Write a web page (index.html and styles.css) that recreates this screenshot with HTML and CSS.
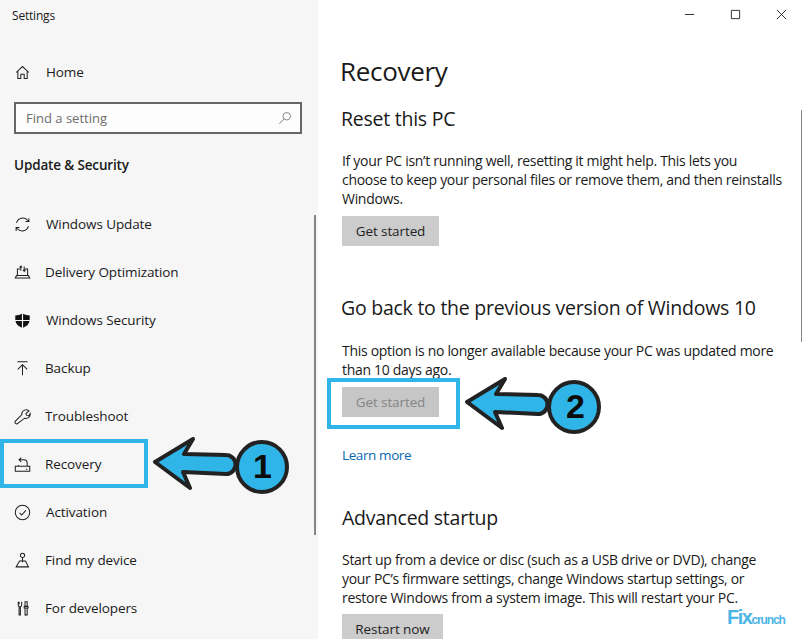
FILE: index.html
```html
<!DOCTYPE html>
<html lang="en">
<head>
    <meta charset="UTF-8">
    <meta name="viewport" content="width=device-width, initial-scale=1.0">
    <title>Settings - Recovery</title>
    <link rel="stylesheet" href="styles.css">
</head>
<body>
    <div class="window">
        <div class="sidebar">
            <div class="app-title">Settings</div>
            <div class="nav-item home shift">
                <svg class="icon" viewBox="0 0 20 20"><path d="M2.500 10 10 3l7.500 7M4.500 8.500V17H8v-5h4v5h3.500V8.500"/></svg>
                <span>Home</span>
            </div>
            <div class="search">
                <span>Find a setting</span>
                <svg class="search-icon" viewBox="0 0 16 16"><circle cx="10" cy="6" r="4.300"/><path d="M7 9.200 1.500 14.500"/></svg>
            </div>
            <h2 class="section">Update &amp; Security</h2>
            <div class="nav">
                <div class="nav-item shift">
                    <svg class="icon" viewBox="0 0 20 20"><path d="M3 8a7.500 7.500 0 0 1 13-3l1.500 1.500M17.500 2.500v4h-4M17 12a7.500 7.500 0 0 1-13 3l-1.500-1.500M2.500 17.500v-4h4"/></svg>
                    <span>Windows Update</span>
                </div>
                <div class="nav-item">
                    <svg class="icon" viewBox="0 0 20 20"><path d="M4 13V6h3M16 13V6h-3M1.500 16.500h17l-1.500-3H3zM8 8V2.500L6.500 4M8 2.500 9.500 4M12 3v5.500l-1.500-1.500M12 8.500l1.500-1.500"/></svg>
                    <span>Delivery Optimization</span>
                </div>
                <div class="nav-item shift">
                    <svg class="icon" viewBox="0 0 20 20"><path class="solid" d="M9.300 2C7 3.300 4 4 1.500 4v5.300h7.800zM10.700 2C13 3.300 16 4 18.500 4v5.300h-7.800zM1.700 10.700h7.600v7.800C5.500 17.300 2.500 14.500 1.700 10.700zM10.700 10.700h7.600c-.8 3.800-3.800 6.600-7.600 7.800z"/></svg>
                    <span>Windows Security</span>
                </div>
                <div class="nav-item">
                    <svg class="icon" viewBox="0 0 20 20"><path d="M4 2h12M10 18V5.500M4.500 11 10 5.500l5.500 5.500"/></svg>
                    <span>Backup</span>
                </div>
                <div class="nav-item">
                    <svg class="icon" viewBox="0 0 20 20"><path d="M12.500 2.500a5 5 0 0 1 5 1l-3.500 3.200 1 2 2.500.3 1.500-2.500a5 5 0 0 1-6.500 5.500L4.500 18a1.800 1.800 0 0 1-2.800-2.500l7.500-7.700a5 5 0 0 1 3.300-5.300z"/></svg>
                    <span>Troubleshoot</span>
                </div>
                <div class="nav-item">
                    <svg class="icon" viewBox="0 0 20 20"><path d="M1.500 18h17v-6h-17zM8.500 2 6 4.500 8.500 7M6 4.500h5.500a4 4 0 0 1 4 4V12M5.500 12v-1.500M14 15.500h1.500"/></svg>
                    <span>Recovery</span>
                </div>
                <div class="nav-item shift">
                    <svg class="icon" viewBox="0 0 20 20"><circle cx="10" cy="10" r="8.500"/><path d="m6.500 10.500 2.500 2.500 5-5.500"/></svg>
                    <span>Activation</span>
                </div>
                <div class="nav-item">
                    <svg class="icon" viewBox="0 0 20 20"><circle cx="10" cy="4" r="2.500"/><path d="M10 6.500V12M6.500 10.500h7l3.500 7H2.500z"/></svg>
                    <span>Find my device</span>
                </div>
                <div class="nav-item">
                    <svg class="icon" viewBox="0 0 20 20"><path d="M6 2v3M9 2v4a2 2 0 0 1-4 0V2M6 8h1.500v9.500H6zM13 2h2.500v5.500H13zM12 7.500h4.500v2H12zM13 9.500h2.500v8H13z"/></svg>
                    <span>For developers</span>
                </div>
            </div>
            <div class="scrollbar"></div>
        </div>

        <div class="main">
            <div class="window-controls">
                <svg viewBox="0 0 12 12"><path d="M1 6h10"/></svg>
                <svg viewBox="0 0 12 12"><path d="M1.500 1.500h9v9h-9z"/></svg>
                <svg viewBox="0 0 12 12"><path d="m1 1 10 10M11 1 1 11"/></svg>
            </div>
            <h1>Recovery</h1>
            <h3 class="reset-title">Reset this PC</h3>
            <p>If your PC isn’t running well, resetting it might help. This lets you<br>choose to keep your personal files or remove them, and then reinstalls<br>Windows.</p>
            <button class="button">Get started</button>

            <h3 class="back-title">Go back to the previous version of Windows 10</h3>
            <p>This option is no longer available because your PC was updated more<br>than 10 days ago.</p>
            <button class="button disabled">Get started</button>
            <a class="learn" href="#">Learn more</a>

            <h3 class="advanced-title">Advanced startup</h3>
            <p>Start up from a device or disc (such as a USB drive or DVD), change<br>your PC’s firmware settings, change Windows startup settings, or<br>restore Windows from a system image. This will restart your PC.</p>
            <button class="button restart">Restart now</button>
            <div class="main-scrollbar"></div>
        </div>

        <!-- tutorial markup drawn over the screenshot -->
        <div class="mark mark-recovery"></div>
        <div class="mark mark-started"></div>

        <svg class="callout callout-one" viewBox="0 0 140 60">
            <path class="arrow" d="M3 25 41 2 32 17 74 18a9.500 9.500 0 0 1 0 19L31 35 38 51z"/>
            <circle class="badge" cx="110" cy="30" r="25"/>
        </svg>
        <span class="badge-num num-one">1</span>

        <svg class="callout callout-two" viewBox="0 0 140 60">
            <path class="arrow" d="M3 25 41 2 32 17 74 18a9.500 9.500 0 0 1 0 19L31 35 38 51z"/>
            <circle class="badge" cx="110" cy="30" r="25"/>
        </svg>
        <span class="badge-num num-two">2</span>

        <div class="watermark"><span class="fix">Fix</span><span class="crunch">crunch</span></div>
    </div>
</body>
</html>
```

FILE: styles.css
```css
* {
    box-sizing: border-box;
}
html, body {
    margin: 0;
    height: 100%;
}
body {
    font-family: "Open Sans", "Noto Sans", sans-serif;
    color: #1a1a1a;
    background: #fff;
    overflow: hidden;
}
.window {
    position: relative;
    display: flex;
    width: 802px;
    height: 639px;
    overflow: hidden;
}

/* left column */
.sidebar {
    position: relative;
    width: 318px;
    flex: none;
    padding-top: 8px;
    background: #f6f6f6;
}
.app-title {
    margin-left: 12px;
    font-size: 12px;
    line-height: 16px;
    letter-spacing: -0.2px;
}
.nav-item {
    display: flex;
    align-items: center;
    gap: 14px;
    height: 48px;
    padding-left: 14px;
    font-size: 13.500px;
    letter-spacing: -0.1px;
}
.nav-item.shift {
    gap: 15px;
}
.home {
    margin-top: 24px;
}
.icon {
    width: 17px;
    height: 17px;
    flex: none;
    fill: none;
    stroke: #1f1f1f;
    stroke-width: 1.200;
}
.icon .solid {
    fill: #111;
    stroke: none;
}
.search {
    display: flex;
    align-items: center;
    justify-content: space-between;
    width: 288px;
    height: 32px;
    margin: 6px 0 0 14px;
    padding: 0 8px 0 10px;
    border: 2px solid #666;
    background: #fdfdfd;
    color: #6d6d6d;
    font-size: 13px;
}
.search-icon {
    width: 14px;
    height: 14px;
    fill: none;
    stroke: #777;
}
.section {
    margin: 21px 0 0 14px;
    font-size: 13.500px;
    line-height: 20px;
    font-weight: 600;
    letter-spacing: -0.15px;
}
.nav {
    margin-top: 25px;
}
.scrollbar {
    position: absolute;
    top: 215px;
    right: 2px;
    width: 2px;
    height: 320px;
    background: #858585;
}

/* right column */
.main {
    flex: 1;
    padding: 0 24px;
}
.main-scrollbar {
    position: absolute;
    top: 110px;
    right: 0;
    width: 1px;
    height: 232px;
    background: #858585;
}
.window-controls {
    position: absolute;
    top: 9px;
    right: 15px;
    display: flex;
    gap: 35px;
}
.window-controls svg {
    width: 11px;
    height: 11px;
    fill: none;
    stroke: #222;
}
h1 {
    margin: 53px 0 0 -2px;
    font-size: 26px;
    line-height: 36px;
    font-weight: 400;
    letter-spacing: -0.3px;
}
h3 {
    margin: 0 0 0 -1px;
    font-size: 19.500px;
    line-height: 26px;
    font-weight: 400;
    letter-spacing: -0.25px;
}
.reset-title {
    margin-top: 17px;
}
.back-title {
    margin: 49px 0 20px -1px;
}
.advanced-title {
    margin: 40px 0 0;
}
p {
    margin: 19px 0 0;
    font-size: 14px;
    line-height: 19px;
    letter-spacing: -0.3px;
    white-space: nowrap;
}
.back-title + p {
    margin-top: 0;
}
.button {
    display: block;
    width: 97px;
    height: 30px;
    margin-top: 8px;
    padding: 0;
    border: 0;
    background: #ccc;
    color: #222;
    font-family: inherit;
    font-size: 13.500px;
    letter-spacing: -0.1px;
}
.disabled {
    background: #c6c6c6;
    color: #858585;
}
.restart {
    width: 101px;
    margin-top: 7px;
}
.learn {
    display: block;
    margin-top: 28px;
    color: #0a67b0;
    font-size: 13.500px;
    line-height: 20px;
    letter-spacing: -0.4px;
    text-decoration: none;
}

/* annotations */
.mark {
    position: absolute;
    border: 4px solid #30b5e8;
}
.mark-recovery {
    left: 0;
    top: 439px;
    width: 148px;
    height: 49px;
}
.mark-started {
    left: 327px;
    top: 378px;
    width: 133px;
    height: 51px;
}
.callout {
    position: absolute;
    width: 140px;
    height: 60px;
}
.callout-one {
    left: 152px;
    top: 437px;
}
.callout-two {
    left: 464px;
    top: 377px;
}
.arrow, .badge {
    fill: #30b5e8;
    stroke: #222;
    stroke-width: 4;
    stroke-linejoin: round;
}
.badge-num {
    position: absolute;
    font-family: "Liberation Sans", sans-serif;
    font-size: 34px;
    line-height: 40px;
    font-weight: 700;
    color: #0c0c0c;
}
.num-one {
    left: 253px;
    top: 446px;
}
.num-two {
    left: 566px;
    top: 386px;
}
.watermark {
    position: absolute;
    left: 727px;
    top: 606px;
    display: flex;
    align-items: baseline;
    color: #4db5e6;
    font-family: "Liberation Sans", sans-serif;
    font-weight: 700;
}
.fix {
    font-size: 20px;
    letter-spacing: -1.5px;
}
.crunch {
    font-size: 12px;
    letter-spacing: -1.1px;
}
```
